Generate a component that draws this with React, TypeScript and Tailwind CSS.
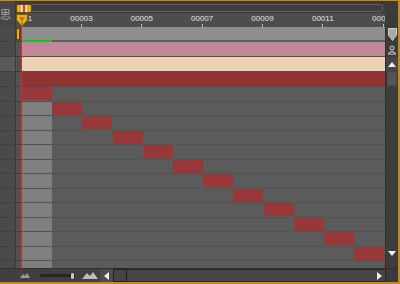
import React from "react"

const LABELS = ["00001", "00003", "00005", "00007", "00009", "00011", "00013"]
const STAIRS = Array.from({ length: 13 }, (_, i) => i)

function Playhead() {
	return (
		<svg width="12" height="13" viewBox="0 0 12 13" className="block">
			<path d="M0.5 0.5 H11.5 V6 L6 12.5 L0.5 6 Z" fill="#e9b21d" stroke="#7a5200" strokeWidth="1" />
			<path d="M3 3 H9 L6 8 Z" fill="#b87a0a" />
			<path d="M6 8 V12" stroke="#c0392b" strokeWidth="1" />
		</svg>
	)
}

function NavHandle() {
	return (
		<svg width="16" height="9" viewBox="0 0 16 9" className="block">
			<rect x="0.5" y="0.5" width="15" height="8" rx="1.5" fill="#e2ad24" stroke="#6b4a00" />
			<rect x="5" y="1" width="1.5" height="7" fill="#f4e4e4" />
			<rect x="7" y="1" width="2" height="7" fill="#c04848" />
			<rect x="9.5" y="1" width="1.5" height="7" fill="#f4e4e4" />
		</svg>
	)
}

function Mountains({ big }: { big?: boolean }) {
	return big ? (
		<svg width="16" height="7" viewBox="0 0 16 7" className="block">
			<path d="M0 7 L5 1 L8 4 L11 0 L16 7 Z" fill="#bdbdbd" />
		</svg>
	) : (
		<svg width="10" height="5" viewBox="0 0 10 5" className="block">
			<path d="M0 5 L3 1 L5 3 L7 0 L10 5 Z" fill="#9a9a9a" />
		</svg>
	)
}

function TrackRow({ h, children, className }: { h: string; children?: React.ReactNode; className?: string }) {
	return <div className={`${h} flex items-stretch border-b border-[#4f4f4f] ${className ?? ""}`}>{children}</div>
}

export default function App() {
	return (
		<div
			className="w-[400px] h-[284px] bg-[#3b3b3b] border-t border-r-2 border-b-2 border-[#c88a14] flex flex-col overflow-hidden relative"
			style={{ fontFamily: '"Liberation Sans", Arial, sans-serif' }}
		>
			{/* navigator bar */}
			<div className="h-[12px] flex">
				<div className="w-[16px] bg-[#474747] border-r border-[#393939]" />
				<div className="flex-1 flex items-center pt-[2px]">
					<NavHandle />
					<div className="flex-1 h-[8px] border border-[#6f5a60] border-l-0 rounded-r-[2px] bg-[#3e3e3e] mr-[15px]" />
				</div>
			</div>

			{/* ruler */}
			<div className="h-[14px] flex">
				<div className="w-[16px] bg-[#474747] border-r border-[#393939] relative">
					<span
						className="absolute left-0 -top-[4px] text-[#a9a9a9] text-[11px] leading-none"
						style={{ fontFamily: '"Noto Sans CJK JP", sans-serif' }}
					>
						思
					</span>
				</div>
				<div className="w-[5px] bg-[#4d4d4d]" />
				<div className="w-[364px] bg-[#4d4d4d] overflow-hidden">
					<div className="flex -ml-[30px]">
						{LABELS.map((l) => (
							<div key={l} className="w-[60.33px] shrink-0 flex flex-col items-center">
								<span className="text-[8px] leading-[10px] text-[#e2e2e2] mt-[1px]">{l}</span>
								<span className="w-px h-[3px] bg-[#bdbdbd]" />
							</div>
						))}
					</div>
				</div>
				<div className="flex-1 bg-[#3a3a3a]" />
			</div>

			{/* tracks */}
			<div className="flex-1 flex overflow-hidden">
				{/* gutter */}
				<div className="w-[21px] flex flex-col">
					{Array.from({ length: 17 }, (_, i) => (
						<div
							key={i}
							className={`${i < 4 ? "h-[15px]" : "h-[14.5px]"} shrink-0 flex border-b border-[#3f3f3f]`}
						>
							<div className={`w-[15px] ${i === 2 ? "bg-[#5a5a5a]" : "bg-[#4a4a4a]"}`} />
							<div className="w-px bg-[#393939]" />
							<div className={`flex-1 ${i === 0 ? "bg-[#4b4b4b]" : "bg-[#535353]"} flex items-center justify-start`}>
								{i === 0 && <div className="w-[4px] h-[12px] bg-[#e4ae22] border border-[#5e4300]" />}
							</div>
						</div>
					))}
				</div>

				{/* timeline */}
				<div className="w-[364px] bg-[#5b5b5b] flex flex-col overflow-hidden">
					<TrackRow h="h-[15px] shrink-0" className="flex-col border-b-0">
						<div className="h-[13px] bg-[#8e8e8e] ml-px" />
						<div className="h-[2px] w-[30px] bg-[#1fbe24] ml-px" />
					</TrackRow>
					<TrackRow h="h-[15px] shrink-0">
						<div className="flex-1 ml-px bg-[#c2879a]" />
					</TrackRow>
					<TrackRow h="h-[15px] shrink-0">
						<div className="flex-1 ml-px bg-[#e9d1b1]" />
					</TrackRow>
					<TrackRow h="h-[15px] shrink-0">
						<div className="flex-1 ml-px bg-[#8f3333]" />
					</TrackRow>
					{STAIRS.map((i) => (
						<div key={i} className="h-[14.5px] shrink-0 flex border-b border-[#525252] relative">
							<div className={`w-[30px] ml-px shrink-0 ${i === 0 ? "bg-[#5b5b5b]" : "bg-[#7f7f7f]"}`} />
							<div
								className="h-[13px] w-[30px] bg-[#993838] shrink-0"
								style={{ marginLeft: i === 0 ? -30 : i * 30.2 - 30 }}
							/>
						</div>
					))}
				</div>

				{/* vertical scrollbar */}
				<div className="flex-1 bg-[#3c3c3c] flex flex-col border-l border-[#2f2f2f]">
					<div className="h-[15px] flex items-center justify-center">
						<svg width="9" height="13" viewBox="0 0 9 13">
							<path d="M0.5 0.5 H8.5 V7 L4.5 12.5 L0.5 7 Z" fill="#a8a8a8" stroke="#d0d0d0" />
						</svg>
					</div>
					<div className="h-[15px] flex items-center justify-center">
						<svg width="10" height="10" viewBox="0 0 10 10">
							<circle cx="5" cy="3" r="2" fill="none" stroke="#d8d8d8" />
							<path d="M1 9 Q5 4 9 9 Z" fill="none" stroke="#d8d8d8" />
						</svg>
					</div>
					<div className="h-[15px] flex items-center justify-center bg-[#454545]">
						<svg width="8" height="5" viewBox="0 0 8 5">
							<path d="M0 5 L4 0 L8 5 Z" fill="#f0f0f0" />
						</svg>
					</div>
					<div className="h-[14px] mx-[1px] bg-[#565656] border border-[#4a4a4a]" />
					<div className="flex-1" />
					<div className="h-[10px] flex items-center justify-center">
						<svg width="8" height="5" viewBox="0 0 8 5">
							<path d="M0 0 L8 0 L4 5 Z" fill="#f0f0f0" />
						</svg>
					</div>
					<div className="h-[10px]" />
				</div>
			</div>

			{/* bottom bar */}
			<div className="h-[14px] bg-[#404040] border-t border-[#2f2f2f] flex items-center">
				<div className="w-[20px]" />
				<Mountains />
				<div className="w-[10px]" />
				<div className="w-[35px] h-[3px] bg-[#262626] rounded-full relative flex items-center justify-end">
					<div className="w-[5px] h-[8px] bg-[#c8c8c8] rounded-[2px] border border-[#2a2a2a]" />
				</div>
				<div className="w-[7px]" />
				<Mountains big />
				<div className="w-[13px] h-full bg-[#4c4c4c] flex items-center justify-center ml-[2px]">
					<svg width="5" height="8" viewBox="0 0 5 8">
						<path d="M5 0 L5 8 L0 4 Z" fill="#f0f0f0" />
					</svg>
				</div>
				<div className="w-[14px] h-full border border-[#202020] bg-[#454545]" />
				<div className="flex-1 h-full bg-[#454545] border-y border-[#2a2a2a] flex items-center justify-end pr-[3px]">
					<svg width="5" height="8" viewBox="0 0 5 8">
						<path d="M0 0 L0 8 L5 4 Z" fill="#f0f0f0" />
					</svg>
				</div>
				<div className="w-[13px] h-full bg-[#3a3a3a] border-l border-[#2a2a2a]" />
			</div>

			{/* playhead */}
			<div className="absolute left-[16px] top-[13px] flex flex-col items-center">
				<Playhead />
			</div>
			<div className="absolute left-[21px] top-[25px] w-px h-[243px] bg-[#e4262a]" />
		</div>
	)
}
